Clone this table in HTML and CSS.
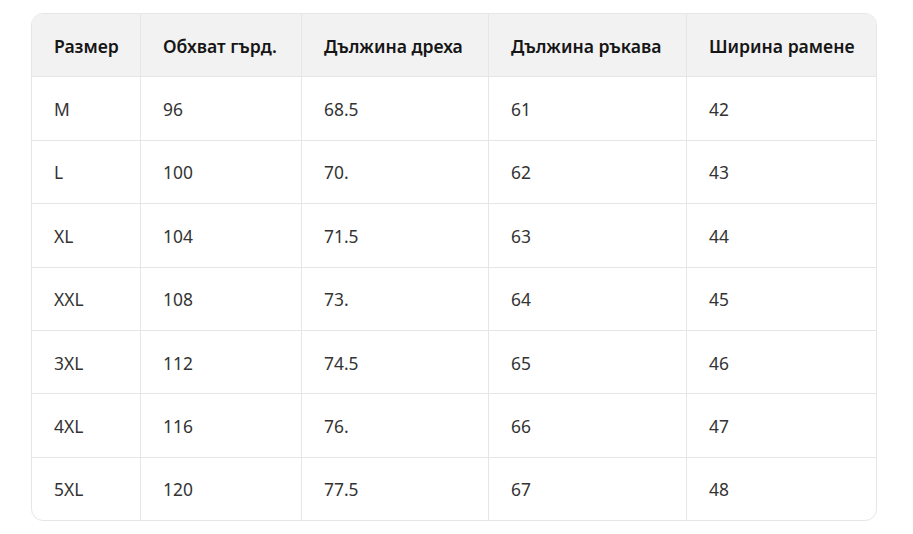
FILE: index.html
```html
<!DOCTYPE html>
<html lang="bg">
<head>
<meta charset="utf-8">
<title>Размерна таблица</title>
<link rel="stylesheet" href="styles.css">
</head>
<body>
<div class="table-wrap">
  <table class="size-table">
    <colgroup>
      <col class="c1"><col class="c2"><col class="c3"><col class="c4"><col class="c5">
    </colgroup>
    <thead>
      <tr><th>Размер</th><th>Обхват гърд.</th><th>Дължина дреха</th><th>Дължина ръкава</th><th>Ширина рамене</th></tr>
    </thead>
    <tbody>
      <tr><td>M</td><td>96</td><td>68.5</td><td>61</td><td>42</td></tr>
      <tr><td>L</td><td>100</td><td>70.</td><td>62</td><td>43</td></tr>
      <tr><td>XL</td><td>104</td><td>71.5</td><td>63</td><td>44</td></tr>
      <tr><td>XXL</td><td>108</td><td>73.</td><td>64</td><td>45</td></tr>
      <tr><td>3XL</td><td>112</td><td>74.5</td><td>65</td><td>46</td></tr>
      <tr><td>4XL</td><td>116</td><td>76.</td><td>66</td><td>47</td></tr>
      <tr><td>5XL</td><td>120</td><td>77.5</td><td>67</td><td>48</td></tr>
    </tbody>
  </table>
</div>
</body>
</html>
```
FILE: styles.css
```css
html, body {
  margin: 0;
  padding: 0;
  background: #ffffff;
}
body {
  font-family: "Noto Sans", "Open Sans", "DejaVu Sans", sans-serif;
  color: #242424;
}
.table-wrap {
  margin: 13px 0 0 31px;
  width: 846px;
  border: 1px solid #e6e6e6;
  border-radius: 12px;
  overflow: hidden;
  box-sizing: border-box;
}
.size-table {
  width: 100%;
  border-collapse: separate;
  border-spacing: 0;
  table-layout: fixed;
}
.c1 { width: 109px; }
.c2 { width: 161px; }
.c3 { width: 187px; }
.c4 { width: 198px; }
.c5 { width: auto; }
.size-table th,
.size-table td {
  text-align: left;
  padding: 20.7px 0 18.7px 22px;
  line-height: 23px;
  font-size: 17.4px;
  border-right: 1px solid #e6e6e6;
  border-bottom: 1px solid #e6e6e6;
  white-space: nowrap;
}
.size-table th:last-child,
.size-table td:last-child {
  border-right: none;
}
.size-table tbody tr:last-child td {
  border-bottom: none;
}
.size-table th {
  background: #f2f2f2;
  font-weight: 600;
  font-size: 17.6px;
  color: #161616;
}
.size-table td {
  font-weight: 400;
  color: #333333;
}
```
